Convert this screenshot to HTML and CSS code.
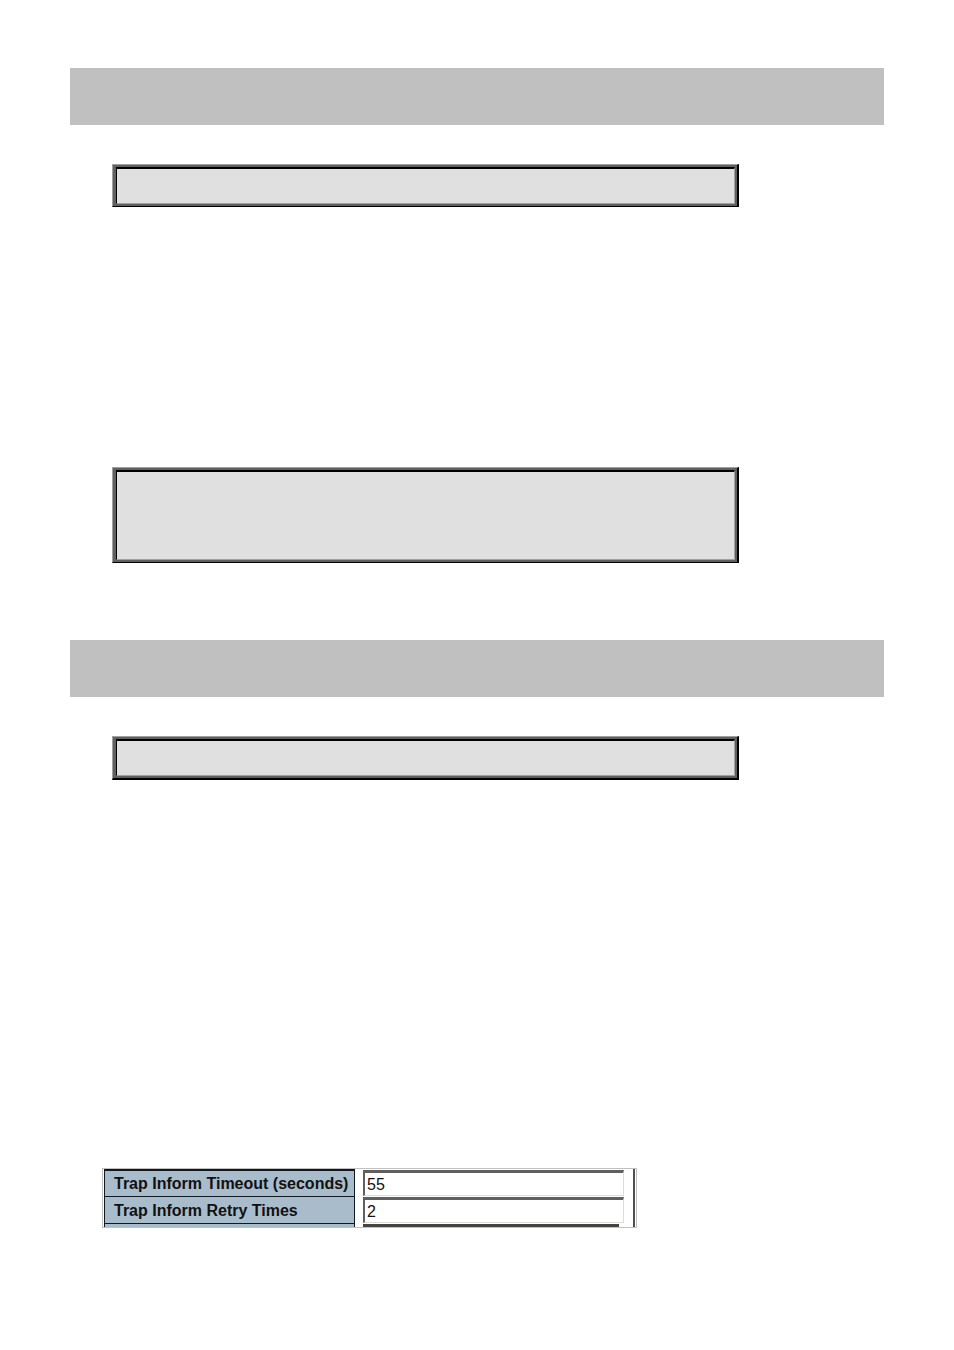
FILE: index.html
```
<!DOCTYPE html>
<html lang="en">
<head>
    <meta charset="UTF-8">
    <title>Trap Inform</title>
    <link rel="stylesheet" href="styles.css">
</head>
<body>

<section class="command">
    <div class="heading"></div>
    <div class="syntax thin"><div class="syntax-inner"></div></div>
</section>

<section class="command example">
    <div class="syntax thin"><div class="syntax-inner tall"></div></div>
</section>

<section class="command">
    <div class="heading"></div>
    <div class="syntax"><div class="syntax-inner"></div></div>
</section>

<form class="web-setting">
    <table>
        <tr>
            <th><label for="timeout">Trap Inform Timeout (seconds)</label></th>
            <td><input type="text" id="timeout" value="55"></td>
        </tr>
        <tr>
            <th><label for="retry">Trap Inform Retry Times</label></th>
            <td><input type="text" id="retry" value="2"></td>
        </tr>
        <!-- next row is cut off by the frame -->
        <tr>
            <th></th>
            <td><div class="next-field"></div></td>
        </tr>
    </table>
</form>

</body>
</html>
```
FILE: styles.css
```
body {
    margin: 0;
    padding: 68px 70px;
    background: #fff;
    font-family: "Liberation Sans", Arial, sans-serif;
    font-size: 16px;
}
.heading {
    height: 57px;
    margin-bottom: 39px;
    background: #c0c0c0;
}
.syntax {
    max-width: 619px;
    margin-left: 42px;
    padding: 2px 2px 2px 3px;
    border: solid #000;
    border-width: 1px 2px 2px 1px;
    border-top-color: #a0a0a0;
    border-left-color: #a0a0a0;
    background: #606060;
}
.syntax.thin {
    border-bottom-width: 1px;
}
.syntax-inner {
    height: 34px;
    border: 1px solid #a0a0a0;
    border-top: 2px solid #000;
    border-left: 1px solid #000;
    background: #e0e0e0;
}
.syntax-inner.tall {
    height: 87px;
}
.example {
    margin: 260px 0 77px;
}
.web-setting {
    box-sizing: border-box;
    max-width: 535px;
    height: 60px;
    margin: 388px 0 0 32px;
    padding: 0 1px;
    border: 1px solid #c0c0c0;
    overflow: hidden;
}
table {
    width: 100%;
    border-collapse: separate;
    border-spacing: 0;
    border-right: 2px solid #505050;
}
th, td {
    box-sizing: border-box;
    height: 27px;
    padding: 0;
}
th {
    width: 251px;
    padding: 1px 0 0 9px;
    border: 1px solid #101820;
    border-top-width: 2px;
    border-bottom: 0;
    background: #a9bccb;
    color: #111;
    text-align: left;
    white-space: nowrap;
}
tr + tr th {
    border-top-width: 1px;
}
td {
    padding: 1px 9px 0 8px;
    vertical-align: top;
}
input {
    display: block;
    box-sizing: border-box;
    width: 100%;
    height: 26px;
    padding: 1px 1px 0 2px;
    border: solid #dfdcd6;
    border-width: 3px 1px 1px 2px;
    border-top-color: #606060;
    border-left-color: #606060;
    background: #fff;
    color: #111;
    font: inherit;
}
.next-field {
    height: 24px;
    margin-right: 5px;
    border-top: 3px solid #444;
}
```
